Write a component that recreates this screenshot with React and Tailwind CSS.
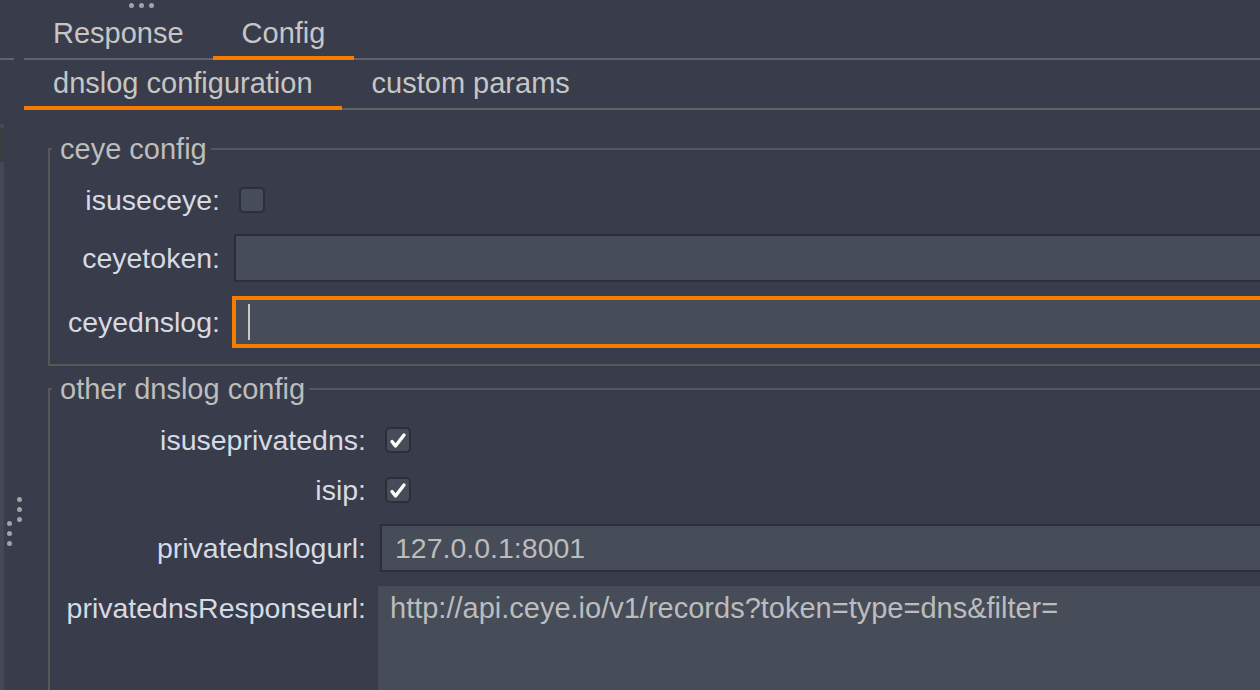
import React from 'react';

const ORANGE = 'border-[#f57c00]';

const Check = () => (
    <svg width="22" height="22" viewBox="0 0 22 22" className="block">
        <path d="M5 12.5 L8.5 17 L17 6" fill="none" stroke="#ffffff" strokeWidth="3.4" strokeLinecap="round" strokeLinejoin="round" />
    </svg>
);

const CheckBox = ({ checked }) => (
    <div className="ml-[19px] w-[26px] h-[26px] rounded-[5px] bg-[#474c59] border-2 border-[#2d2f38] flex items-center justify-center">
        {checked && <Check />}
    </div>
);

const Dot = () => <div className="w-[5px] h-[5px] rounded-full bg-[#a3a3a3]" />;

const App = () => {
    return (
        <div className="relative w-[1260px] h-[690px] overflow-hidden bg-[#393c4a] font-['Liberation_Sans',Arial,sans-serif] text-[29px] flex flex-col">
            {/* splitter grip on top */}
            <div className="absolute left-[129px] top-[3px] flex gap-[5px]">
                <Dot /><Dot /><Dot />
            </div>

            {/* ─── Main tabs ─── */}
            <div className="flex h-[60px] shrink-0">
                <div className="w-[14px] border-b-2 border-[#646464]" />
                <div className="w-[10px]" />
                <div className="px-[29px] pt-[19px] leading-[28px] text-[#c6c6c6] border-b-2 border-[#646464]">Response</div>
                <div className={`px-[29px] pt-[19px] leading-[28px] text-[#c6c6c6] border-b-4 ${ORANGE}`}>Config</div>
                <div className="flex-1 border-b-2 border-[#646464]" />
            </div>

            {/* ─── Sub tabs ─── */}
            <div className="flex h-[50px] shrink-0">
                <div className="w-[24px]" />
                <div className={`px-[29px] pt-[9px] leading-[28px] text-[#c6c6c6] border-b-4 ${ORANGE}`}>dnslog configuration</div>
                <div className="px-[30px] pt-[9px] leading-[28px] text-[#c6c6c6] border-b-2 border-[#646464]">custom params</div>
                <div className="flex-1 border-b-2 border-[#646464]" />
            </div>

            <div className="flex flex-1 min-h-0">
                {/* left scroll strip */}
                <div className="relative w-[24px] shrink-0 flex flex-col pt-[14px]">
                    <div className="w-[4px] flex-1 bg-[#454957] pt-[4px]">
                        <div className="h-[34px] bg-[#383d40]" />
                    </div>
                    <div className="absolute left-[17px] top-[387px] flex flex-col gap-[5px]">
                        <Dot /><Dot /><Dot />
                    </div>
                    <div className="absolute left-[7px] top-[411px] flex flex-col gap-[5px]">
                        <Dot /><Dot /><Dot />
                    </div>
                </div>

                <div className="flex-1 pl-[24px] pt-[25px] min-w-0">
                    {/* ─── ceye config ─── */}
                    <fieldset className="border-2 border-[#575757] mr-[-60px]">
                        <legend className="ml-[2px] pl-[8px] pr-[4px] leading-[28px] text-[#bdbdbd]">ceye config</legend>
                        <div className="pt-[13px] pb-[18px] text-[28.5px]">
                            <div className="flex items-center h-[48px]">
                                <div className="w-[170px] text-right leading-[28px] text-[#d6dae4]">isuseceye:</div>
                                <CheckBox />
                            </div>
                            <div className="flex items-center mt-[10px]">
                                <div className="w-[170px] text-right leading-[28px] text-[#d6dae4]">ceyetoken:</div>
                                <div className="ml-[14px] flex-1 h-[48px] bg-[#474c59] border-2 border-[#2d2f38]" />
                            </div>
                            <div className="flex items-center mt-[16px]">
                                <div className="w-[170px] text-right leading-[28px] text-[#d6dae4]">ceyednslog:</div>
                                <div className={`ml-[14px] flex-1 h-[48px] bg-[#474c59] border-2 ${ORANGE} ring-2 ring-[#f57c00] flex items-center pl-[12px]`}>
                                    <div className="w-[2px] h-[36px] bg-[#c8c8c8]" />
                                </div>
                            </div>
                        </div>
                    </fieldset>

                    {/* ─── other dnslog config ─── */}
                    <fieldset className="mt-[9px] border-2 border-[#575757] mr-[-60px]">
                        <legend className="ml-[2px] pl-[8px] pr-[4px] leading-[28px] text-[#bdbdbd]">other dnslog config</legend>
                        <div className="pt-[13px] pb-[40px] text-[28.5px]">
                            <div className="flex items-center h-[48px]">
                                <div className="w-[316px] text-right leading-[28px] text-[#d6dae4]">isuseprivatedns:</div>
                                <CheckBox checked />
                            </div>
                            <div className="flex items-center h-[48px] mt-[2px]">
                                <div className="w-[316px] text-right leading-[28px] text-[#d6dae4]">isip:</div>
                                <CheckBox checked />
                            </div>
                            <div className="flex items-center mt-[10px]">
                                <div className="w-[316px] text-right leading-[28px] text-[#d6dae4]">privatednslogurl:</div>
                                <div className="ml-[14px] flex-1 h-[48px] bg-[#474c59] border-2 border-[#2d2f38] flex items-center pl-[13px] leading-[28px] text-[#bcbcbc]">
                                    127.0.0.1:8001
                                </div>
                            </div>
                            <div className="flex items-start mt-[14px]">
                                <div className="w-[316px] pt-[8px] text-right leading-[28px] text-[#d6dae4]">privatednsResponseurl:</div>
                                <div className="ml-[12px] flex-1 h-[200px] bg-[#474c59] pt-[8px] pl-[12px] leading-[28px] text-[29px] text-[#bcbcbc]">
                                    http://api.ceye.io/v1/records?token=type=dns&amp;filter=
                                </div>
                            </div>
                        </div>
                    </fieldset>
                </div>
            </div>
        </div>
    );
};

export default App;
